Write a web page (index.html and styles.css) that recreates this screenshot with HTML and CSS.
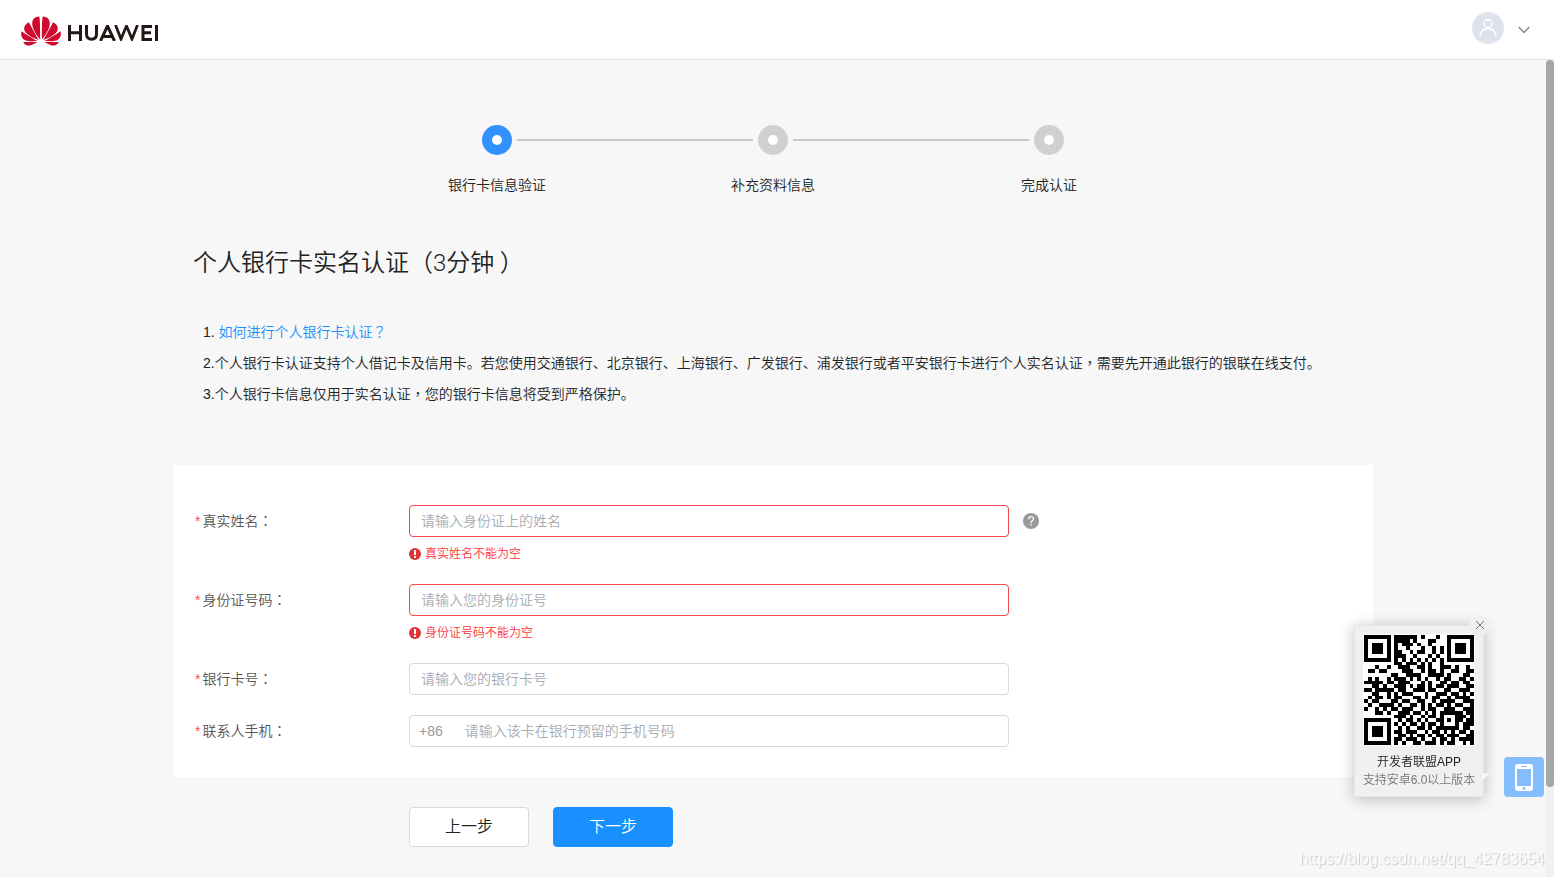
FILE: index.html
```html
<!DOCTYPE html>
<html lang="zh-CN">
<head>
<meta charset="utf-8">
<title>个人银行卡实名认证</title>
<link rel="stylesheet" href="styles.css">
</head>
<body>
<header class="topbar">
  <a class="brand" href="#" aria-label="HUAWEI">
    <svg class="flower" viewBox="0 0 40 30" aria-hidden="true">
      <g id="petals" fill="#cf0a2c">
        <path d="M19.2 23.5C19 15 19.300 5 18.300.5C13 .5 10.800 4 11.300 9C12 14 16 20 19.200 23.500Z"/>
        <path d="M17.800 24C14 18 10 10 7.800 6.200C3.500 8.500 2.200 12 4 15.500C6.500 19.500 13 22.500 17.800 24Z"/>
        <path d="M16.800 25.100C11 22 4 17.800.600 15.200C-.800 19.500 1 23.500 4.500 24.600C8 25.500 13 25.300 16.800 25.100Z"/>
        <path d="M16.500 26C11.500 26 6 26 2.200 25.900C4 29.500 7.500 30.300 10.500 29C13 28 15 27 16.500 26Z"/>
      </g>
      <use href="#petals" transform="translate(40 0) scale(-1 1)"/>
    </svg>
    <svg class="wordmark" viewBox="0 0 90 16" aria-hidden="true">
      <g fill="none" stroke="#231815" stroke-width="3">
        <path d="M1.500 0V16M12.500 0V16M1.500 7.800H12.500"/>
        <path d="M18.500 0V9C18.500 12.500 20.500 14.300 23.500 14.300S28.500 12.500 28.500 9V0"/>
        <path d="M32.500 16L39.500 1L46.500 16M35.500 11.500H43.500"/>
        <path d="M47.500 0L53 14L58.500 1L64 14L69.500 0" stroke-width="2.800"/>
        <path d="M84 1.500H75V14.500H84M75 7.800H83M88.500 0V16"/>
      </g>
    </svg>
  </a>
  <button class="account" type="button" aria-label="账号菜单">
    <svg class="avatar" viewBox="0 0 32 32" aria-hidden="true">
      <circle cx="16" cy="16" r="16" fill="#dfe1ec"/>
      <g fill="none" stroke="#fff" stroke-width="1.500"><circle cx="16" cy="11.500" r="4"/><path d="M8 24.500C8 14 24 14 24 24.500"/></g>
    </svg>
    <svg class="chevron" viewBox="0 0 12 8" aria-hidden="true"><path d="M.700 1L6 6.500L11.300 1" fill="none" stroke="#888" stroke-width="1.500"/></svg>
  </button>
</header>

<main class="page">
  <ol class="steps">
    <li class="step current"><span class="dot"></span><span>银行卡信息验证</span></li>
    <li class="step"><span class="dot"></span><span>补充资料信息</span></li>
    <li class="step"><span class="dot"></span><span>完成认证</span></li>
  </ol>

  <h1>个人银行卡实名认证<span class="mid" lang="zh-TW">（</span>3分钟<span class="mid" lang="zh-TW"> ）</span></h1>

  <div class="notes">
    <p>1. <a href="#">如何进行个人银行卡认证<span class="mid" lang="zh-TW">？</span></a></p>
    <p>2.个人银行卡认证支持个人借记卡及信用卡。若您使用交通银行、北京银行、上海银行、广发银行、浦发银行或者平安银行卡进行个人实名认证<span class="mid" lang="zh-TW">，</span>需要先开通此银行的银联在线支付。</p>
    <p>3.个人银行卡信息仅用于实名认证<span class="mid" lang="zh-TW">，</span>您的银行卡信息将受到严格保护。</p>
  </div>

  <form>
    <div class="panel">
      <div class="row">
        <label for="name"><i>*</i>真实姓名<span class="mid" lang="zh-TW">：</span></label>
        <div class="control">
          <input class="box invalid" id="name" type="text" placeholder="请输入身份证上的姓名">
          <p class="error"><svg viewBox="0 0 12 12" aria-hidden="true"><circle cx="6" cy="6" r="6" fill="#e13438"/><path d="M5 2H7V7H5ZM5 8H7V10H5Z" fill="#fff"/></svg>真实姓名不能为空</p>
        </div>
        <svg class="help" viewBox="0 0 16 16" role="img" aria-label="帮助"><circle cx="8" cy="8" r="8" fill="#999"/><path d="M5.700 6.200C5.700 2.800 10.500 3 10.500 5.800C10.500 7.800 8 7.700 8 10" fill="none" stroke="#fff" stroke-width="1.300"/><path d="M7.300 11H8.700V12.500H7.300Z" fill="#fff"/></svg>
      </div>
      <div class="row">
        <label for="idno"><i>*</i>身份证号码<span class="mid" lang="zh-TW">：</span></label>
        <div class="control">
          <input class="box invalid" id="idno" type="text" placeholder="请输入您的身份证号">
          <p class="error"><svg viewBox="0 0 12 12" aria-hidden="true"><circle cx="6" cy="6" r="6" fill="#e13438"/><path d="M5 2H7V7H5ZM5 8H7V10H5Z" fill="#fff"/></svg>身份证号码不能为空</p>
        </div>
      </div>
      <div class="row">
        <label for="card"><i>*</i>银行卡号<span class="mid" lang="zh-TW">：</span></label>
        <div class="control"><input class="box" id="card" type="text" placeholder="请输入您的银行卡号"></div>
      </div>
      <div class="row">
        <label for="phone"><i>*</i>联系人手机<span class="mid" lang="zh-TW">：</span></label>
        <div class="control"><div class="box phone"><span>+86</span><input id="phone" type="tel" placeholder="请输入该卡在银行预留的手机号码"></div></div>
      </div>
    </div>
    <div class="actions">
      <button class="btn" type="button">上一步</button>
      <button class="btn primary" type="button">下一步</button>
    </div>
  </form>
</main>

<aside class="app-card">
  <button class="close" type="button" aria-label="关闭"><svg viewBox="0 0 10 10" aria-hidden="true"><path d="M1 1L9 9M9 1L1 9" stroke="#777" fill="none"/></svg></button>
  <svg class="qr" id="qr" viewBox="0 0 29 29" role="img" aria-label="二维码" shape-rendering="crispEdges"></svg>
  <strong>开发者联盟APP</strong>
  <small>支持安卓6.0以上版本</small>
  <svg class="tail" viewBox="0 0 9 10" aria-hidden="true"><path d="M0 2L9 0L0 9Z" fill="#f8f8fa"/></svg>
</aside>
<button class="mobile" type="button" aria-label="手机应用"><svg viewBox="0 0 18 27" aria-hidden="true"><path fill="#fff" fill-rule="evenodd" d="M3 0H15Q18 0 18 3V24Q18 27 15 27H3Q0 27 0 24V3Q0 0 3 0ZM2 5V22H16V5ZM6 2V3H12V2ZM9 23A1.500 1.500 0 1 0 9 26A1.500 1.500 0 1 0 9 23Z"/></svg></button>
<div class="scrolltrack"><div class="thumb"></div></div>
<div class="watermark">https://blog.csdn.net/qq_42783654</div>
<script src="qr.js"></script>
</body>
</html>
```
FILE: styles.css
```css
* { box-sizing: border-box; }
body {
  margin: 0;
  min-height: 100vh;
  overflow: hidden;
  background: #f7f7f7;
  color: #222;
  font: 350 14px/20px "Liberation Sans", "Noto Sans CJK SC", sans-serif;
}
button, input { font: inherit; }
p, h1, ol { margin: 0; padding: 0; }
.mid { font-family: "Noto Sans CJK TC", sans-serif; line-height: 1; }

.topbar {
  display: flex;
  justify-content: space-between;
  align-items: flex-start;
  height: 60px;
  padding: 12px 24px 0 21px;
  background: #fff;
  border-bottom: 1px solid #e2e2e2;
}
.brand { display: flex; gap: 7px; padding-top: 4px; }
.flower { width: 40px; height: 30px; }
.wordmark { width: 90px; height: 16px; margin-top: 9px; }
.account {
  display: flex;
  align-items: center;
  gap: 14px;
  padding: 0;
  border: 0;
  background: none;
}
.avatar { width: 32px; height: 32px; }
.chevron { width: 12px; height: 8px; margin-top: 4px; }

.page {
  width: calc(100% - 354px);
  max-width: 1200px;
  margin-left: 173px;
  padding-top: 65px;
}
.steps {
  display: grid;
  grid-template-columns: repeat(3, 276px);
  justify-content: center;
  list-style: none;
}
.step {
  position: relative;
  display: flex;
  flex-direction: column;
  align-items: center;
  gap: 20px;
}
.step + .step::before {
  content: "";
  position: absolute;
  top: 14px;
  left: -118px;
  width: 236px;
  height: 2px;
  background: #c8c8c8;
}
.dot {
  width: 30px;
  height: 30px;
  border: 10px solid #d0d0d0;
  border-radius: 50%;
  background: #fff;
}
.current .dot { border-color: #3191ff; }

h1 {
  margin: 50px 20px 0;
  font-family: Roboto, "Noto Sans CJK SC", sans-serif;
  font-size: 24px;
  font-weight: 350;
  line-height: 36px;
}
.notes { padding: 36px 30px 0; line-height: 31px; }
.notes a { color: #1890ff; text-decoration: none; }

.panel {
  display: grid;
  gap: 20px;
  margin-top: 55px;
  padding: 40px 22px 30px;
  background: #fff;
}
.row { display: grid; grid-template-columns: 214px 600px 16px; }
.row label { color: #555; line-height: 32px; }
.row i { margin-right: 2px; color: #ff4d4f; font-style: normal; }
.control { min-width: 0; }
.box {
  display: block;
  width: 100%;
  height: 32px;
  padding: 0 11px;
  border: 1px solid #d9d9d9;
  border-radius: 4px;
  background: #fff;
  color: #555;
  outline: 0;
}
.box.invalid { border-color: #f5484b; }
input::placeholder { color: #a8acb2; opacity: 1; }
.phone { display: flex; align-items: center; gap: 22px; padding: 0 9px; }
.phone span { color: #999; }
.phone input { flex: 1; min-width: 0; padding: 0; border: 0; outline: 0; }
.error {
  display: flex;
  align-items: center;
  gap: 4px;
  padding-top: 8px;
  color: #ff3538;
  font-size: 12px;
  line-height: 19px;
}
.error svg { width: 12px; height: 12px; margin-bottom: 2px; }
.help { width: 16px; height: 16px; margin: 8px 14px; }

.actions { display: flex; gap: 24px; padding: 30px 0 30px 236px; }
.btn {
  width: 120px;
  height: 40px;
  padding: 0;
  border: 1px solid #d9d9d9;
  border-radius: 4px;
  background: #fff;
  color: #222;
  font-size: 16px;
}
.btn.primary { border-color: #1890ff; background: #1890ff; color: #fff; }

.app-card {
  position: fixed;
  right: 70px;
  bottom: 80px;
  display: flex;
  flex-direction: column;
  align-items: center;
  width: 130px;
  padding: 8px 0 7px;
  border: 1px solid #e2e6ea;
  background: #f1eff0;
  box-shadow: 0 2px 14px rgba(0, 0, 0, .25);
  font-size: 12px;
  line-height: 18px;
}
.qr { width: 112px; height: 112px; padding: 1px; margin-bottom: 7px; background: #fff; }
.app-card strong { font-weight: 350; }
.app-card small { color: #777; font-size: 12px; white-space: nowrap; }
.close {
  position: absolute;
  top: -11px;
  right: -7px;
  width: 20px;
  height: 20px;
  padding: 5px;
  border: 0;
  border-radius: 50%;
  background: #f1eff0;
}
.close svg { display: block; width: 10px; height: 10px; }
.tail { position: absolute; right: -8px; bottom: 14px; width: 9px; height: 10px; }
.mobile {
  position: fixed;
  right: 10px;
  bottom: 80px;
  display: grid;
  place-items: center;
  width: 40px;
  height: 40px;
  padding: 0;
  border: 0;
  border-radius: 4px;
  background: #83bdfb;
}
.mobile svg { width: 18px; height: 27px; }
.scrolltrack {
  position: fixed;
  top: 60px;
  right: 0;
  bottom: 0;
  width: 8px;
  background: #f1f1f1;
}
.thumb { height: 89%; border-radius: 4px; background: #a5a7a6; }
.watermark {
  position: fixed;
  right: 9px;
  bottom: 8px;
  color: #fafafa;
  font-size: 16px;
  text-shadow: 1px 1px 1px #ccc;
}
```
FILE: qr.js
```javascript
const modules = [
  "11111110111111010001001111111",
  "10000010111101000110001000001",
  "10111010101110100100001011101",
  "10111010100100010010101011101",
  "10111010110010110010101011101",
  "10000010111001000101001000001",
  "11111110101010101010101111111",
  "00000000110111010100100000000",
  "00010010011100110100111010010",
  "01101100001110010110100110011",
  "00000001100111100111101000110",
  "01010010111010101001011001101",
  "11111011011100010100110110110",
  "00110100111010110101101110011",
  "11011111011001110110011001110",
  "00110010101110001001110110101",
  "01011010110001101011001011110",
  "10110001101100110010111100111",
  "01001111010011010101101011001",
  "10010101101110010110011100111",
  "00011010011101101010111111011",
  "00000000111010010110100011101",
  "11111110010110101001101011011",
  "10000010101011010110100010111",
  "10111010010100110101111110110",
  "10111010110111001011010101101",
  "10111010011010110101101110011",
  "10000010110111010010110101111",
  "11111110101001101110101100101"
];
const path = document.createElementNS("http://www.w3.org/2000/svg", "path");
path.setAttribute("d", modules.map((row, y) =>
  [...row].map((m, x) => m === "1" ? `M${x} ${y}h1v1h-1z` : "").join("")).join(""));
document.getElementById("qr").append(path);
```
